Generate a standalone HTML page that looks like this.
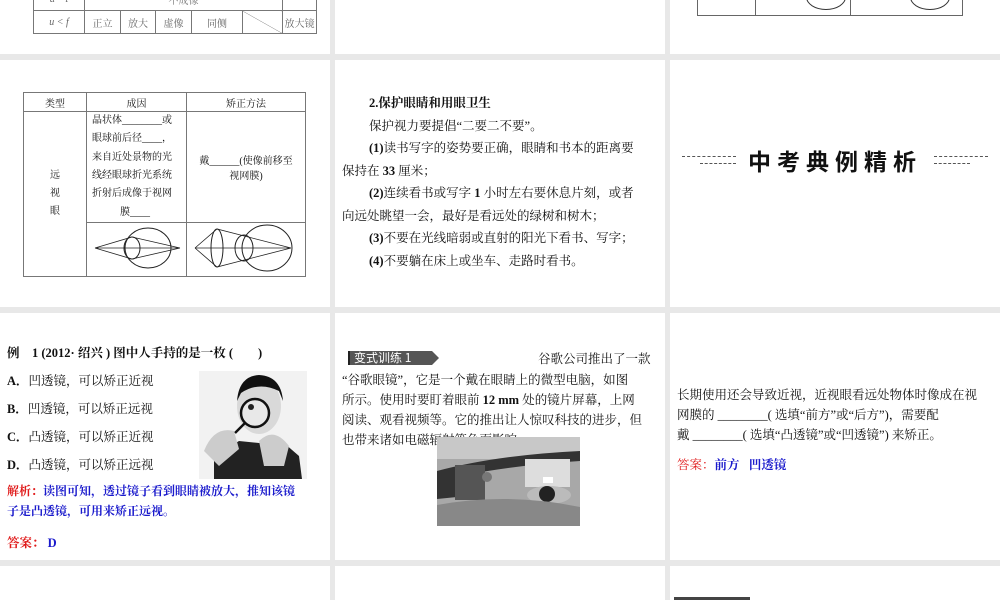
<!DOCTYPE html>
<html><head><meta charset="utf-8"><style>
*{margin:0;padding:0;box-sizing:border-box}
body{width:1000px;height:600px;background:#e8e8e8;position:relative;overflow:hidden;font-family:"Liberation Serif","Noto Serif CJK SC","Noto Sans CJK SC",serif;color:#111}
.s{position:absolute;background:#fff;overflow:hidden}
.a{position:absolute;white-space:nowrap}
table{border-collapse:collapse;position:absolute}
td{border:1px solid #777;text-align:center;font-size:10px}
.b{font-weight:bold}
.p{font-size:12.5px;line-height:22.5px}
</style></head><body>
<!-- row1 -->
<div class="s" style="left:0;top:0;width:330px;height:54px">
<table style="left:33px;top:-12px;width:284px;border:1px solid #333">
<tr style="height:22px"><td style="width:51px;color:#666">u = f</td><td colspan="5" style="color:#777">不成像</td><td style="width:34px"></td></tr>
<tr style="height:23px"><td style="color:#666;font-style:italic">u &lt; f</td><td style="width:36px;color:#666">正立</td><td style="width:35px;color:#666">放大</td><td style="width:36px;color:#666">虚像</td><td style="width:51px;color:#666">同侧</td><td style="width:40px;background:linear-gradient(to top right,transparent 49%,#777 50%,transparent 51%)"></td><td style="color:#666">放大镜</td></tr>
</table></div>
<div class="s" style="left:335px;top:0;width:330px;height:54px"></div>
<div class="s" style="left:670px;top:0;width:330px;height:54px">
<div class="a" style="left:27px;top:-2px;width:266px;height:18px;border:1px solid #666;border-top:none"></div>
<div class="a" style="left:85px;top:0;width:1px;height:16px;background:#666"></div>
<div class="a" style="left:180px;top:0;width:1px;height:16px;background:#666"></div>
<div class="a" style="left:136px;top:-16px;width:40px;height:26px;border:1px solid #333;border-radius:50%"></div>
<div class="a" style="left:240px;top:-16px;width:40px;height:26px;border:1px solid #333;border-radius:50%"></div>
</div>
<!-- row2 -->
<div class="s" style="left:0;top:60px;width:330px;height:247px">
<table style="left:23px;top:32px;width:283px">
<tr style="height:19px"><td style="width:63px">类型</td><td style="width:100px">成因</td><td>矫正方法</td></tr>
<tr style="height:111px"><td rowspan="2" style="line-height:18px">远<br>视<br>眼</td><td style="text-align:left;line-height:18.3px;padding-left:5px">晶状体________或<br>眼球前后径____，<br>来自近处景物的光<br>线经眼球折光系统<br>折射后成像于视网<br><span style="padding-left:28px">膜____</span></td><td>戴______(使像前移至<br>视网膜)</td></tr>
<tr style="height:54px"><td><svg width="98" height="50"><ellipse cx="60" cy="25" rx="23" ry="20" fill="none" stroke="#222"/><ellipse cx="44" cy="25" rx="8" ry="11" fill="none" stroke="#222"/><path d="M7 25H92M7 25L44 14L92 25M7 25L44 36L92 25" fill="none" stroke="#222" stroke-width=".8"/></svg></td><td><svg width="118" height="50"><ellipse cx="80" cy="25" rx="25" ry="23" fill="none" stroke="#222"/><ellipse cx="57" cy="25" rx="9" ry="13" fill="none" stroke="#222"/><ellipse cx="30" cy="25" rx="6" ry="19" fill="none" stroke="#222"/><path d="M8 25H104M8 25L30 6L104 25M8 25L30 44L104 25" fill="none" stroke="#222" stroke-width=".8"/></svg></td></tr>
</table></div>
<div class="s" style="left:335px;top:60px;width:330px;height:247px">
<div class="a b p" style="left:34px;top:32px">2.保护眼睛和用眼卫生</div>
<div class="a p" style="left:34px;top:55px">保护视力要提倡“二要二不要”。</div>
<div class="a p" style="left:34px;top:77px"><b>(1)</b>读书写字的姿势要正确，眼睛和书本的距离要</div>
<div class="a p" style="left:7px;top:100px">保持在 <b>33</b> 厘米；</div>
<div class="a p" style="left:34px;top:122px"><b>(2)</b>连续看书或写字 <b>1</b> 小时左右要休息片刻，或者</div>
<div class="a p" style="left:7px;top:145px">向远处眺望一会，最好是看远处的绿树和树木；</div>
<div class="a p" style="left:34px;top:167px"><b>(3)</b>不要在光线暗弱或直射的阳光下看书、写字；</div>
<div class="a p" style="left:34px;top:190px"><b>(4)</b>不要躺在床上或坐车、走路时看书。</div>
</div>
<div class="s" style="left:670px;top:60px;width:330px;height:247px">
<div class="a" style="left:12px;top:96px;width:54px;border-top:1px dashed #555"></div>
<div class="a" style="left:30px;top:103px;width:36px;border-top:1px dashed #555"></div>
<div class="a" style="left:264px;top:96px;width:54px;border-top:1px dashed #555"></div>
<div class="a" style="left:264px;top:103px;width:36px;border-top:1px dashed #555"></div>
<div class="a b" style="left:78px;top:83px;font-family:'Noto Sans CJK SC',sans-serif;font-size:23px;letter-spacing:6px">中考典例精析</div>
</div>
<!-- row3 -->
<div class="s" style="left:0;top:313px;width:330px;height:247px">
<div class="a b" style="left:7px;top:30px;font-size:12.5px">例 &nbsp;&nbsp;&nbsp;1 (2012· 绍兴 ) 图中人手持的是一枚 ( &nbsp;&nbsp;&nbsp;&nbsp;&nbsp;&nbsp;&nbsp;)</div>
<div class="a p" style="left:7px;top:57px"><b>A．</b>凹透镜，可以矫正近视</div>
<div class="a p" style="left:7px;top:85px"><b>B．</b>凹透镜，可以矫正远视</div>
<div class="a p" style="left:7px;top:113px"><b>C．</b>凸透镜，可以矫正近视</div>
<div class="a p" style="left:7px;top:141px"><b>D．</b>凸透镜，可以矫正远视</div>
<svg class="a" style="left:199px;top:58px" width="108" height="108"><rect width="108" height="108" fill="#f2f2f2"/><path d="M15 108V85L40 70L60 72L85 72L100 85L103 108Z" fill="#222"/><ellipse cx="60" cy="35" rx="22" ry="28" fill="#d9d9d9"/><path d="M38 30Q40 5 60 4Q82 5 84 30L80 20Q60 10 42 22Z" fill="#111"/><circle cx="56" cy="42" r="14" fill="#e8e8e8" stroke="#111" stroke-width="2.5"/><circle cx="52" cy="36" r="3" fill="#222"/><path d="M46 52L36 62" stroke="#111" stroke-width="2.5"/><path d="M5 80Q15 55 35 60L40 78L20 95Z" fill="#ccc"/><path d="M60 70Q75 55 90 75L85 95L65 95Z" fill="#ccc"/></svg>
<div class="a b p" style="left:7px;top:168px;color:#1a1acc;font-family:'Noto Serif CJK SC',serif;font-size:12px;line-height:20px"><span style="color:#e01a1a">解析：</span>读图可知，透过镜子看到眼睛被放大，推知该镜<br>子是凸透镜，可用来矫正远视。</div>
<div class="a b" style="left:7px;top:220px;font-size:12.5px;color:#1a1acc"><span style="color:#e01a1a">答案：</span> D</div>
</div>
<div class="s" style="left:335px;top:313px;width:330px;height:247px">
<div class="a" style="left:13px;top:38px;width:84px;height:14px;background:#555;color:#fff;font-size:12px;line-height:14px;font-family:'Noto Sans CJK SC',sans-serif;padding-left:4px;border-left:2px solid #222">变式训练 1</div>
<div class="a" style="left:97px;top:38px;width:0;height:0;border-left:7px solid #555;border-top:7px solid transparent;border-bottom:7px solid transparent"></div>
<div class="a p" style="left:203px;top:36px;line-height:20px">谷歌公司推出了一款</div>
<div class="a p" style="left:7px;top:57px;line-height:20px">“谷歌眼镜”，它是一个戴在眼睛上的微型电脑，如图<br>所示。使用时要盯着眼前 <b>12 mm</b> 处的镜片屏幕，上网<br>阅读、观看视频等。它的推出让人惊叹科技的进步，但<br>也带来诸如电磁辐射等负面影响。</div>
<svg class="a" style="left:102px;top:124px" width="143" height="89"><rect width="143" height="89" fill="#a8a8a8"/><rect width="143" height="22" fill="#c8c8c8"/><path d="M0 34Q60 18 143 14V24Q80 28 28 38L20 60L0 62Z" fill="#333"/><rect x="18" y="28" width="30" height="35" fill="#555"/><circle cx="50" cy="40" r="5" fill="#777"/><rect x="88" y="22" width="45" height="28" fill="#ddd"/><rect x="106" y="40" width="10" height="6" fill="#fff"/><ellipse cx="112" cy="58" rx="22" ry="9" fill="#bbb"/><circle cx="110" cy="57" r="8" fill="#222"/><path d="M0 68Q70 55 143 70V89H0Z" fill="#888"/></svg>
</div>
<div class="s" style="left:670px;top:313px;width:330px;height:247px">
<div class="a p" style="left:7px;top:72px;line-height:20px">长期使用还会导致近视，近视眼看远处物体时像成在视<br>网膜的 ________( 选填“前方”或“后方”)，需要配<br>戴 ________( 选填“凸透镜”或“凹透镜”) 来矫正。</div>
<div class="a b" style="left:7px;top:142px;font-size:12.5px;color:#1a1acc"><span style="color:#e01a1a;font-weight:normal">答案：</span>前方 &nbsp;&nbsp;凹透镜</div>
</div>
<!-- row4 -->
<div class="s" style="left:0;top:566px;width:330px;height:34px"></div>
<div class="s" style="left:335px;top:566px;width:330px;height:34px"></div>
<div class="s" style="left:670px;top:566px;width:330px;height:34px"><div class="a" style="left:4px;top:31px;width:76px;height:4px;background:#444"></div></div>
</body></html>
